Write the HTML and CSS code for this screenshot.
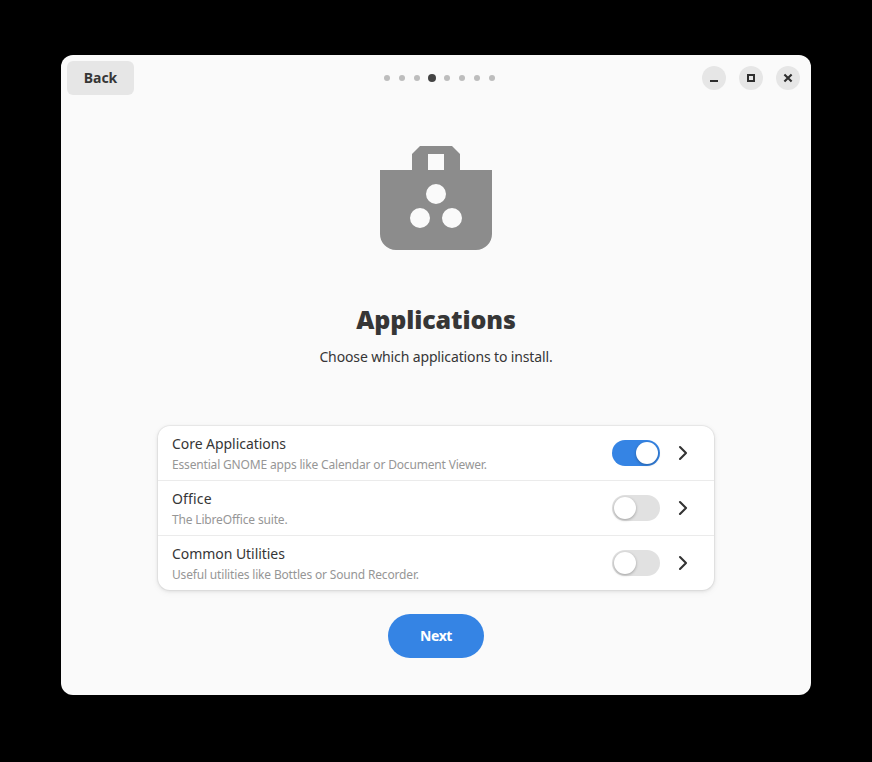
FILE: index.html
```
<!DOCTYPE html>
<html lang="en">
<head>
<meta charset="utf-8">
<title>Applications</title>
<link rel="stylesheet" href="styles.css">
</head>
<body>
<div class="window">
  <header class="headerbar">
    <button class="back">Back</button>
    <div class="dots"><i></i><i></i><i></i><i class="active"></i><i></i><i></i><i></i><i></i></div>
    <div class="controls">
      <button aria-label="Minimize"><svg viewBox="0 0 24 24"><path d="M8 14h8v2H8z"/></svg></button>
      <button aria-label="Maximize"><svg viewBox="0 0 24 24"><path fill-rule="evenodd" d="M8 8h8v8H8zM10 10v4h4v-4z"/></svg></button>
      <button aria-label="Close"><svg viewBox="0 0 24 24"><path class="stroke" d="M8.4 8.4l7.2 7.2M15.6 8.4l-7.2 7.2"/></svg></button>
    </div>
  </header>
  <main class="page">
    <svg class="hero" viewBox="0 0 112 104"><path fill-rule="evenodd" d="M0 24H32V8L40 0H72L80 8V24H112V88A16 16 0 0 1 96 104H16A16 16 0 0 1 0 88ZM48 8V24H64V8ZM46 48a10 10 0 1 0 20 0a10 10 0 1 0-20 0ZM30 72a10 10 0 1 0 20 0a10 10 0 1 0-20 0ZM62 72a10 10 0 1 0 20 0a10 10 0 1 0-20 0Z"/></svg>
    <h1>Applications</h1>
    <p class="lead">Choose which applications to install.</p>
    <ul class="list">
      <li class="row">
        <div class="text"><div class="title">Core Applications</div><div class="subtitle">Essential GNOME apps like Calendar or Document Viewer.</div></div>
        <span class="switch on"></span>
        <svg class="chevron" viewBox="0 0 16 16"><path d="M5 2l6 6-6 6"/></svg>
      </li>
      <li class="row">
        <div class="text"><div class="title office">Office</div><div class="subtitle">The LibreOffice suite.</div></div>
        <span class="switch"></span>
        <svg class="chevron" viewBox="0 0 16 16"><path d="M5 2l6 6-6 6"/></svg>
      </li>
      <li class="row">
        <div class="text"><div class="title">Common Utilities</div><div class="subtitle">Useful utilities like Bottles or Sound Recorder.</div></div>
        <span class="switch"></span>
        <svg class="chevron" viewBox="0 0 16 16"><path d="M5 2l6 6-6 6"/></svg>
      </li>
    </ul>
    <button class="next">Next</button>
  </main>
</div>
</body>
</html>
```
FILE: styles.css
```
* { box-sizing: border-box; margin: 0; padding: 0; }
body {
  background: #000;
  color: #363636;
  font-family: "Noto Sans", "Open Sans", sans-serif;
  height: 762px;
  padding: 55px 61px;
  overflow: hidden;
}
button { border: 0; font-family: inherit; color: inherit; }
.window {
  width: 750px;
  height: 640px;
  background: #fafafa;
  border-radius: 12px;
  overflow: hidden;
}
.headerbar {
  height: 46px;
  padding: 0 11px 0 6px;
  display: grid;
  grid-template-columns: 316px 113px 1fr;
  align-items: center;
}
.back {
  width: 67px;
  height: 34px;
  padding-bottom: 2px;
  border-radius: 6px;
  background: #e6e6e6;
  font-size: 14px;
  font-weight: 700;
}
.dots { display: flex; align-items: center; gap: 7px; }
.dots i {
  width: 6px;
  height: 6px;
  margin: 0 1px;
  border-radius: 50%;
  background: #bdbdbd;
}
.dots i.active { width: 8px; height: 8px; margin: 0; background: #444; }
.controls { justify-self: end; display: flex; gap: 13px; }
.controls button { width: 24px; height: 24px; border-radius: 50%; background: #e6e6e6; }
.controls svg { display: block; width: 24px; height: 24px; fill: #2e2e2e; }
.controls .stroke { stroke: #2e2e2e; stroke-width: 2.1; }
.page { display: flex; flex-direction: column; align-items: center; padding-top: 45px; }
.hero { width: 112px; height: 104px; fill: #8c8c8c; }
h1 {
  margin-top: 49px;
  height: 40px;
  line-height: 40px;
  font-size: 25px;
  font-weight: 900;
  letter-spacing: -.1px;
}
.lead { margin-top: 7px; height: 22px; line-height: 22px; font-size: 14px; letter-spacing: -.13px; }
.list {
  width: 556px;
  margin-top: 58px;
  list-style: none;
  background: #fff;
  border-radius: 12px;
  box-shadow: 0 0 0 1px rgba(0,0,0,.04), 0 1px 3px 1px rgba(0,0,0,.07), 0 2px 6px 2px rgba(0,0,0,.03);
}
.row {
  height: 55px;
  padding: 0 23px 0 14px;
  display: flex;
  align-items: center;
  border-bottom: 1px solid #ebebeb;
}
.row:last-child { height: 54px; border-bottom: 0; }
.text { flex: 1; white-space: nowrap; }
.title { height: 21px; line-height: 21px; font-size: 14px; letter-spacing: -.05px; }
.title.office { letter-spacing: .15px; }
.subtitle { height: 20px; line-height: 22px; font-size: 12px; letter-spacing: -.17px; color: #969696; }
.switch {
  width: 48px;
  height: 26px;
  padding: 2px;
  border-radius: 13px;
  background: #e1e1e1;
  display: flex;
}
.switch::before {
  content: "";
  width: 22px;
  height: 22px;
  border-radius: 50%;
  background: #fff;
  box-shadow: 0 1px 3px rgba(0,0,0,.3);
}
.switch.on { background: #3584e4; justify-content: flex-end; }
.chevron { width: 16px; height: 16px; margin-left: 15px; margin-right: 0; fill: none; stroke: #333; stroke-width: 2.1; stroke-linecap: round; stroke-linejoin: round; }
.next {
  margin-top: 24px;
  width: 96px;
  height: 44px;
  padding-bottom: 2px;
  border-radius: 22px;
  background: #3584e4;
  color: #fff;
  font-size: 14px;
  font-weight: 700;
  letter-spacing: -.4px;
}
```
